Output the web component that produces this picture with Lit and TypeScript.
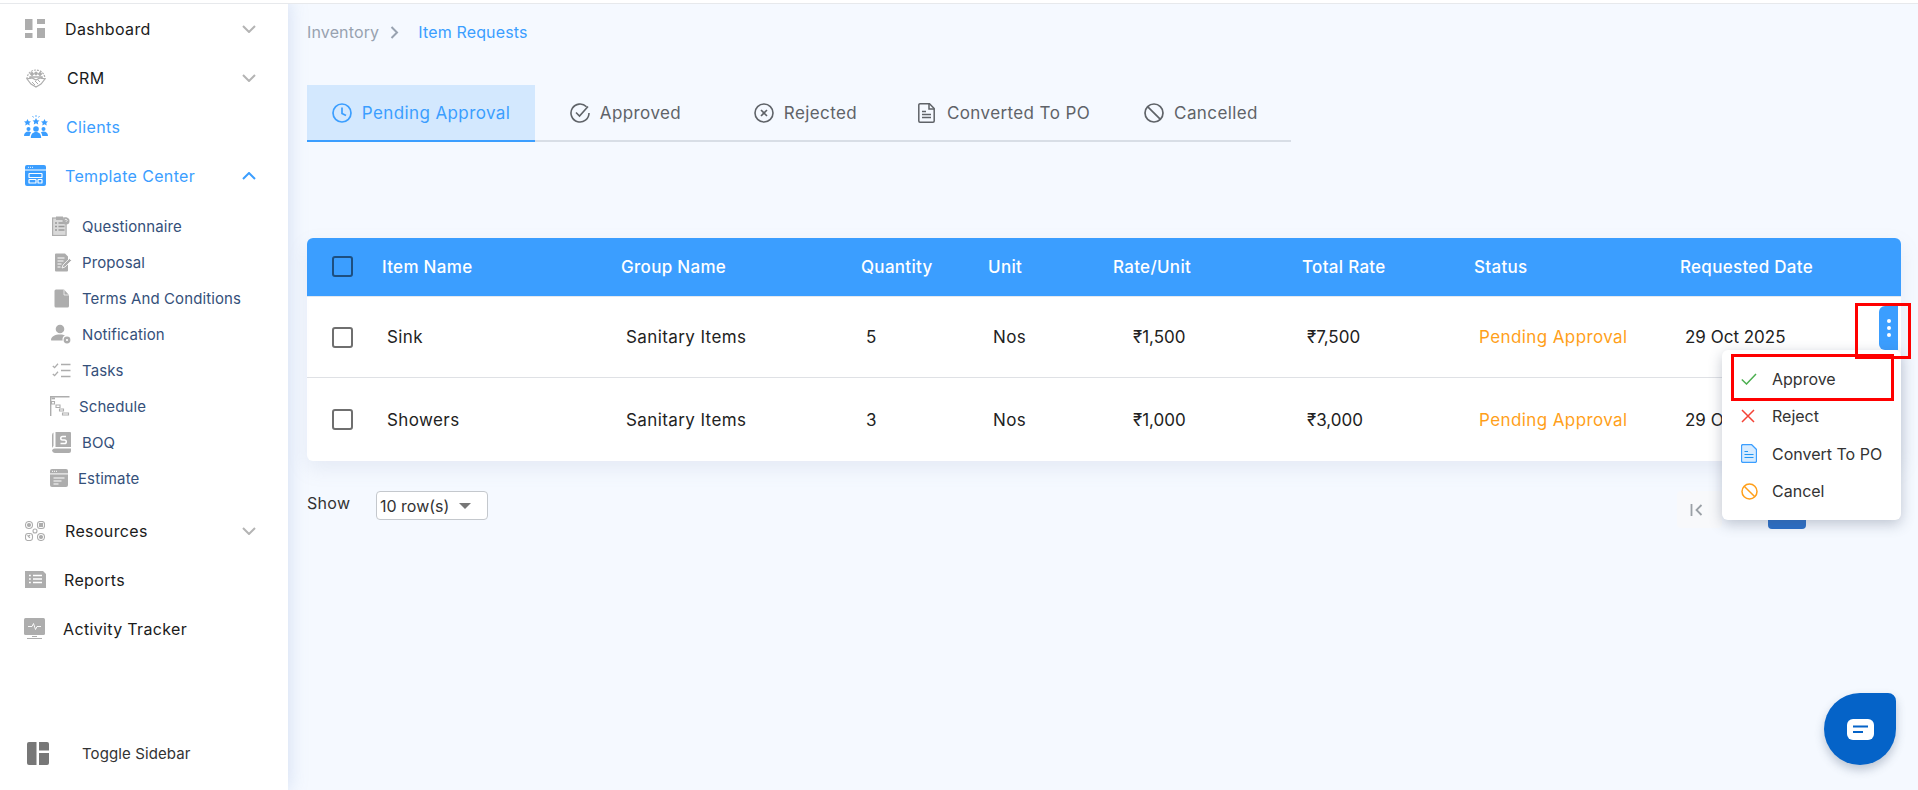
import { LitElement, html, css } from "lit";
import { customElement } from "lit/decorators.js";

const G = "#adadad";
const B = "#3b9eff";

const icons: Record<string, any> = {
  dashboard: html`<svg width="20" height="20" viewBox="0 0 20 20" fill="${G}"><rect x="0" y="0" width="7.5" height="11"/><rect x="0" y="14" width="7.5" height="5"/><rect x="12" y="0" width="8" height="5"/><rect x="12" y="9" width="8" height="10"/></svg>`,
  crm: html`<svg width="22" height="22" viewBox="0 0 22 22" fill="none" stroke="${G}"><path d="M2 12a9 9 0 0 1 18 0" stroke-width="1.2" stroke-dasharray="2 1"/><circle cx="7" cy="7" r="1.4" fill="${G}"/><circle cx="11" cy="6.5" r="1.4" fill="${G}"/><circle cx="15" cy="7" r="1.4" fill="${G}"/><path d="M5 12v-2h12v2" stroke-width="1.4"/><path d="M2 12l4 5 5 3 5-3 4-5-5-1-4 2-4-2z" stroke-width="1.2"/><path d="M7 15l3 3M10 14l3 3M13 13l2 2" stroke-width="1"/></svg>`,
  clients: html`<svg width="24" height="24" viewBox="0 0 24 24" fill="${B}"><path d="M3.5 4l1.100 2.200 2.400.3-1.700 1.600.4 2.400-2.200-1.200-2.200 1.200.4-2.400L0 6.500l2.400-.3zM12 3l1.100 2.200 2.400.3-1.700 1.600.4 2.400L12 8.300l-2.200 1.200.4-2.400-1.700-1.600 2.400-.3zM20.500 4l1.100 2.200 2.400.3-1.700 1.600.4 2.400-2.200-1.200-2.200 1.200.4-2.400L17 6.500l2.400-.3z"/><path d="M12 0v2M8.500 1l1 1.500M15.500 1l-1 1.500" stroke="${B}" stroke-width=".8"/><circle cx="4.500" cy="14" r="2"/><circle cx="19.500" cy="14" r="2"/><circle cx="12" cy="14" r="2.800"/><path d="M0 21c0-2.800 1.800-4.400 4.500-4.400 1 0 1.900.3 2.600.8-.9 1-1.300 2.200-1.400 3.600zM24 21c0-2.800-1.800-4.400-4.500-4.400-1 0-1.900.3-2.600.8.9 1 1.300 2.200 1.400 3.600zM6.800 23c0-3.800 2-6 5.200-6s5.200 2.200 5.200 6z"/></svg>`,
  template: html`<svg width="21" height="21" viewBox="0 0 21 21"><rect width="21" height="21" rx="2" fill="${B}"/><rect x="0" y="4.500" width="21" height="1" fill="#fff"/><path d="M3 2.300h1M5 2.300h1M7 2.300h1" stroke="#fff" stroke-width=".9"/><rect x="4" y="8.500" width="13" height="4" rx=".6" fill="none" stroke="#fff" stroke-width="1.2"/><rect x="4" y="14.500" width="7" height="3.500" rx=".6" fill="none" stroke="#fff" stroke-width="1.2"/><rect x="13" y="14.500" width="4" height="3.500" rx=".6" fill="none" stroke="#fff" stroke-width="1.2"/></svg>`,
  questionnaire: html`<svg width="18" height="20" viewBox="0 0 18 20"><rect x=".6" y="2" width="13.500" height="17.500" fill="#d9d9d9" stroke="${G}" stroke-width="1.2"/><rect x="4" y=".5" width="7" height="3.500" fill="${G}"/><path d="M3 7h2M3 10.500h2M3 14h2M6.500 7h6M6.500 10.500h6M6.500 14h6" stroke="#9a9a9a" stroke-width="1.4"/><circle cx="14" cy="5" r="3.500" fill="${G}"/><path d="M13 4.200a1 1 0 1 1 1.500 1l-.5.6" stroke="#fff" stroke-width=".8" fill="none"/></svg>`,
  proposal: html`<svg width="18" height="19" viewBox="0 0 18 19"><path d="M1 1.500a1 1 0 0 1 1-1h9l3 3v14a1 1 0 0 1-1 1H2a1 1 0 0 1-1-1z" fill="${G}"/><path d="M3.500 5h7M3.500 8h6M3.500 11h4M3.500 14h3" stroke="#fff" stroke-width="1.1"/><path d="M8 15l1-3 6.500-6.500 2 2L11 14z" fill="${G}" stroke="#fff" stroke-width=".8"/></svg>`,
  terms: html`<svg width="16" height="19" viewBox="0 0 16 19"><path d="M.5 2A1.500 1.500 0 0 1 2 .5h8l5 5.500v11a1.500 1.500 0 0 1-1.500 1.500H2A1.500 1.500 0 0 1 .5 17z" fill="${G}"/><path d="M10 .5V6h5" fill="none" stroke="#fff" stroke-width=".7"/></svg>`,
  notification: html`<svg width="20" height="20" viewBox="0 0 20 20" fill="${G}"><circle cx="9" cy="5" r="4.300"/><path d="M0 16c0-3.500 4-5.500 9-5.500 2.500 0 4 .5 5 1-2 .8-3 3-2.300 5H1.500C.5 16.500 0 16.500 0 16z"/><circle cx="16" cy="16" r="3.400"/><circle cx="16" cy="16" r="1.100" fill="#fff"/></svg>`,
  tasks: html`<svg width="19" height="15" viewBox="0 0 19 15" fill="none" stroke="${G}" stroke-width="1.3"><path d="M.8 3l1.800 1.600L6 .8M.8 11l1.800 1.600L6 8.800"/><path d="M9 1.500h9.500M9 7.500h9.500M9 13.500h9.500"/></svg>`,
  schedule: html`<svg width="20" height="20" viewBox="0 0 20 20" fill="none" stroke="${G}"><path d="M.7 20V.7H19.500" stroke-width="1.4"/><rect x="1.500" y="1.500" width="3.500" height="1.800" fill="${G}" stroke="none"/><path d="M1.500 5.500h3v2.500h-3zM6 9h4v2.500H6zM9.500 13h4v2h-4zM12.500 17h6v2h-6z" stroke-width="1.1"/></svg>`,
  boq: html`<svg width="19" height="21" viewBox="0 0 19 21" fill="${G}"><path d="M0 16V3a3 3 0 0 1 1.500-2.500V14A4 4 0 0 0 0 16z"/><path d="M3.500 0H18a1 1 0 0 1 1 1v14H3.500z"/><path d="M3.500 16.500H19V19a2 2 0 0 1-2 2H3a3 3 0 0 1-3-2.500 3 3 0 0 1 3.500-2z"/><path d="M14 4.500h-3.500a1.700 1.700 0 0 0 0 3.500h2a1.800 1.800 0 0 1 0 3.600H8.500" fill="none" stroke="#fff" stroke-width="1.5"/></svg>`,
  estimate: html`<svg width="18" height="18" viewBox="0 0 18 18"><rect width="18" height="18" rx="2" fill="${G}"/><rect y="4.400" width="18" height="1" fill="#fff"/><path d="M2 2.300h1M4 2.300h1M6 2.300h1" stroke="#fff"/><path d="M3.500 9h11M3.500 12h8M3.500 15h5" stroke="#fff" stroke-width="1.1"/></svg>`,
  resources: html`<svg width="20" height="20" viewBox="0 0 20 20" fill="none" stroke="${G}" stroke-width="1.1"><circle cx="4" cy="4" r="3.500"/><rect x="12.500" y=".5" width="7" height="7" rx="2.500"/><rect x=".5" y="12.500" width="7" height="7" rx="2.500"/><circle cx="16" cy="16" r="3.500"/><circle cx="10" cy="10" r="2"/><circle cx="4" cy="4" r="1.500" fill="${G}"/><rect x="14.500" y="2.500" width="3" height="3" fill="${G}"/><path d="M3 16l2-2M2.500 14l2.500 3"/><circle cx="16" cy="16" r="1.500" fill="${G}"/></svg>`,
  reports: html`<svg width="21" height="17" viewBox="0 0 21 17"><path d="M0 0h18l3 3v14H0z" fill="${G}"/><path d="M4 4.500h1.800M4 8h1.800M4 11.500h1.800M8 4.500h9M8 8h9M8 11.500h9" stroke="#fff" stroke-width="1.5"/></svg>`,
  activity: html`<svg width="21" height="21" viewBox="0 0 21 21"><rect width="21" height="17" rx="1.500" fill="${G}"/><path d="M4 8.500h4l1.500-3 2 6 1.500-3h4" fill="none" stroke="#fff" stroke-width=".9"/><path d="M8 18.500h5M3 20.500h15" stroke="${G}"/></svg>`,
  toggle: html`<svg width="22" height="23" viewBox="0 0 22 23" fill="#777"><path d="M2 0h7.500v23H2a2 2 0 0 1-2-2V2a2 2 0 0 1 2-2z"/><path d="M12 0h8a2 2 0 0 1 2 2v6.500H12z"/><path d="M12 11h10v10a2 2 0 0 1-2 2h-8z"/></svg>`,
  clock: html`<svg width="20" height="20" viewBox="0 0 20 20" fill="none" stroke="${B}" stroke-width="1.7"><circle cx="10" cy="10" r="9"/><path d="M10 4.500V10.500L14 12.500"/></svg>`,
  approved: html`<svg width="20" height="20" viewBox="0 0 20 20" fill="none" stroke="#5f6368" stroke-width="1.6"><path d="M16.500 3.800A9 9 0 1 0 19 10"/><path d="M6 9.500l3.500 3.500L18 3.500"/></svg>`,
  rejected: html`<svg width="20" height="20" viewBox="0 0 20 20" fill="none" stroke="#5f6368" stroke-width="1.6"><circle cx="10" cy="10" r="9"/><path d="M7 7l6 6M13 7l-6 6"/></svg>`,
  doc: html`<svg class="wide" width="17" height="20" viewBox="0 0 17 20" fill="none" stroke="#5f6368" stroke-width="1.5"><path d="M2 .8h9.500L16.200 5.500V18a1.200 1.200 0 0 1-1.200 1.200H2A1.200 1.200 0 0 1 .8 18V2A1.200 1.200 0 0 1 2 .8z"/><path d="M11 1v5h5M4 8.500h4M4 11.500h9M4 14.500h9"/></svg>`,
  ban: html`<svg class="shift" width="20" height="20" viewBox="0 0 20 20" fill="none" stroke="#5f6368" stroke-width="1.7"><circle cx="10" cy="10" r="9"/><path d="M3.600 3.600l12.800 12.800"/></svg>`,
  check: html`<svg width="16" height="12" viewBox="0 0 16 12" fill="none" stroke="#4caf50" stroke-width="1.5"><path d="M.8 6.500l4.700 4.500L15 1"/></svg>`,
  cross: html`<svg width="14" height="14" viewBox="0 0 14 14" fill="none" stroke="#f44336" stroke-width="1.5"><path d="M1 1l12 12M13 1L1 13"/></svg>`,
  docBlue: html`<svg width="16" height="19" viewBox="0 0 16 19"><path d="M2 .5h8.500L15.500 5.500V17a1.500 1.500 0 0 1-1.500 1.500H2A1.500 1.500 0 0 1 .5 17V2A1.500 1.500 0 0 1 2 .5z" fill="#d6ebff" stroke="${B}" stroke-width="1.3"/><path d="M3.500 7.500h3.500M3.500 10.500h9M3.500 13.500h9" stroke="#2196f3" stroke-width="1.2"/></svg>`,
  banOrange: html`<svg width="17" height="17" viewBox="0 0 17 17" fill="none" stroke="#ff9f1a" stroke-width="1.5"><circle cx="8.500" cy="8.500" r="7.500"/><path d="M3.200 3.200l10.600 10.600"/></svg>`,
};

const down = html`<svg class="chev" width="14" height="8" viewBox="0 0 14 8" fill="none" stroke="#b4b4b4" stroke-width="2"><path d="M1 1l6 6 6-6"/></svg>`;
const up = html`<svg class="chev" width="14" height="8" viewBox="0 0 14 8" fill="none" stroke="${B}" stroke-width="2"><path d="M1 7l6-6 6 6"/></svg>`;

interface Nav { icon: string; label: string; pad: number; gap: number; active?: boolean; caret?: "up" | "down"; }

const topNav: Nav[] = [
  { icon: "dashboard", label: "Dashboard", pad: 25, gap: 20, caret: "down" },
  { icon: "crm", label: "CRM", pad: 25, gap: 20, caret: "down" },
  { icon: "clients", label: "Clients", pad: 24, gap: 18, active: true },
  { icon: "template", label: "Template Center", pad: 25, gap: 19, active: true, caret: "up" },
];
const subNav: Nav[] = [
  { icon: "questionnaire", label: "Questionnaire", pad: 52, gap: 12 },
  { icon: "proposal", label: "Proposal", pad: 54, gap: 10 },
  { icon: "terms", label: "Terms And Conditions", pad: 54, gap: 12 },
  { icon: "notification", label: "Notification", pad: 51, gap: 11 },
  { icon: "tasks", label: "Tasks", pad: 52, gap: 11 },
  { icon: "schedule", label: "Schedule", pad: 50, gap: 9 },
  { icon: "boq", label: "BOQ", pad: 52, gap: 11 },
  { icon: "estimate", label: "Estimate", pad: 50, gap: 10 },
];
const lowNav: Nav[] = [
  { icon: "resources", label: "Resources", pad: 25, gap: 20, caret: "down" },
  { icon: "reports", label: "Reports", pad: 25, gap: 18 },
  { icon: "activity", label: "Activity Tracker", pad: 24, gap: 18 },
];

const tabs = [
  { icon: "clock", label: "Pending Approval", active: true },
  { icon: "approved", label: "Approved" },
  { icon: "rejected", label: "Rejected" },
  { icon: "doc", label: "Converted To PO" },
  { icon: "ban", label: "Cancelled" },
];

const rows = [
  { name: "Sink", group: "Sanitary Items", qty: "5", unit: "Nos", rate: "₹1,500", total: "₹7,500", date: "29 Oct 2025", menu: true },
  { name: "Showers", group: "Sanitary Items", qty: "3", unit: "Nos", rate: "₹1,000", total: "₹3,000", date: "29 Oct 2025", menu: false },
];

const menu = [
  { icon: "check", label: "Approve" },
  { icon: "cross", label: "Reject" },
  { icon: "docBlue", label: "Convert To PO" },
  { icon: "banOrange", label: "Cancel" },
];

@customElement("app-root")
export class AppRoot extends LitElement {
  static styles = css`
    :host { display: block; width: 1918px; height: 790px; overflow: hidden; font-family: Inter, "Noto Sans", sans-serif; background: #f5f9ff; }
    * { box-sizing: border-box; }
    .page { display: flex; height: 790px; position: relative; }
    .topline { position: absolute; left: 0; right: 0; top: 0; height: 4px; background: #fff; border-bottom: 1px solid #e7e9ec; z-index: 3; }

    aside { width: 288px; flex: none; background: #fff; box-shadow: 0 0 18px rgba(120, 150, 205, .28); display: flex; flex-direction: column; padding-top: 4px; z-index: 2; }
    .nav { display: flex; align-items: center; height: 49px; font-size: 16px; letter-spacing: .35px; color: #1b1b1b; padding-right: 32px; }
    .nav.active { color: #3b9eff; }
    .ico { display: flex; align-items: center; justify-content: center; }
    .nav .chev { margin-left: auto; }
    .sub { display: flex; align-items: center; height: 36px; font-size: 15px; letter-spacing: .1px; color: #35507a; }
    .sublist { display: flex; flex-direction: column; margin: 0 0 10px; padding-top: 8px; }
    .spacer { flex: 1; }
    .toggle { display: flex; align-items: center; height: 36px; padding-left: 27px; margin-bottom: 19px; font-size: 15px; letter-spacing: .1px; color: #333; gap: 33px; }

    main { flex: 1; padding: 0 17px 0 19px; min-width: 0; position: relative; }
    .crumb { display: flex; align-items: center; height: 24px; margin-top: 20px; font-size: 16px; letter-spacing: .15px; color: #98a2b0; }
    .crumb svg { margin: 0 19px 0 11px; }
    .crumb b { font-weight: 400; color: #3b9eff; }
    .tabs { display: grid; grid-template-columns: 228px 181px 179px 218px 178px; width: 984px; margin-top: 41px; border-bottom: 2px solid #d8dee6; height: 57px; }
    .tab { display: flex; align-items: center; justify-content: center; gap: 10px; font-size: 17px; letter-spacing: .4px; color: #5f6368; height: 56px; }
    .tab.active { background: #d3e8fe; color: #3b9eff; height: 57px; border-bottom: 2px solid #3b9eff; }
    .tab .wide { margin-right: 2px; }
    .tab .shift { margin-left: -2px; }

    .tablewrap { position: relative; margin-top: 96px; border-radius: 6px; box-shadow: 0 8px 20px rgba(120, 140, 180, .13); background: #fff; }
    .grid { display: grid; grid-template-columns: 75px 239px 240px 127px 125px 189px 172px 206px 221px; align-items: center; }
    .head { height: 59px; background: #3b9eff; color: #fff; font-weight: 500; font-size: 17px; letter-spacing: .3px; border-radius: 6px 6px 0 0; border-bottom: 1px solid #e3e8ef; }
    .row { height: 81px; font-size: 17px; letter-spacing: .4px; color: #222; border-bottom: 1px solid #dfe1e5; }
    .row.last { height: 83px; border-bottom: none; border-radius: 0 0 6px 6px; }
    .row > span { padding-left: 5px; }
    .row > .rate { padding-left: 20px; }
    .row > .num { letter-spacing: 0; }
    .row > .status { color: #ff9f1a; }
    .cb { width: 21px; height: 21px; border: 2.5px solid #6f6f6f; border-radius: 3px; margin-left: 25px; }
    .head .cb { border-color: #1d4f80; margin-top: -2px; }
    .row > .datecell { display: flex; align-items: center; justify-content: space-between; padding-right: 3px; align-self: stretch; letter-spacing: 0; }
    .kebab { width: 19px; height: 44px; margin-bottom: 18px; background: #3b9eff; border-radius: 6px 0 0 6px; display: flex; flex-direction: column; align-items: center; justify-content: center; gap: 3px; }
    .kebab i { width: 4px; height: 4px; border-radius: 50%; background: #fff; }

    .menu { position: absolute; top: 112px; right: 0; width: 179px; height: 170px; background: #fff; border-radius: 6px; box-shadow: 0 4px 14px rgba(70, 85, 110, .32); padding-top: 10px; z-index: 2; }
    .mi { display: flex; align-items: center; height: 37.5px; font-size: 16px; color: #333; padding-left: 19px; }
    .mico { width: 31px; display: flex; align-items: center; }
    .redbox { position: absolute; border: 3px solid #f00; z-index: 3; }
    .rb1 { left: 1548px; top: 65px; width: 56px; height: 56px; }
    .rb2 { left: 1424px; top: 116px; width: 163px; height: 47px; }

    .foot { display: flex; align-items: flex-start; margin-top: 30px; padding-right: 95px; font-size: 16px; color: #333; }
    .show { width: 45px; line-height: 24px; letter-spacing: .3px; }
    .select { margin-left: 24px; width: 112px; height: 29px; border: 1px solid #c4c8cd; border-radius: 4px; background: #fff; display: flex; align-items: center; padding-left: 3px; font-size: 16px; gap: 10px; }
    .caret { width: 0; height: 0; border: 6px solid transparent; border-top: 6px solid #777; border-bottom: none; }
    .pager { margin-left: auto; display: flex; }
    .pbtn { width: 45px; height: 37px; background: #f8f9fb; border-radius: 4px; display: flex; align-items: center; justify-content: center; padding-right: 6px; }
    .pgap { width: 46px; }
    .pcur { width: 38px; height: 38px; background: #2a6fc9; border-radius: 4px; }

    .chat { position: absolute; left: 1824px; top: 693px; width: 72px; height: 72px; background: #0563c8; border-radius: 50% 8px 50% 50%; box-shadow: 0 5px 10px rgba(60, 80, 110, .3); display: flex; align-items: center; justify-content: center; z-index: 4; }
  `;

  private nav(n: Nav) {
    return html`<div class="nav ${n.active ? "active" : ""}" style="padding-left:${n.pad}px">
      <span class="ico" style="margin-right:${n.gap}px">${icons[n.icon]}</span>
      <span>${n.label}</span>
      ${n.caret === "up" ? up : n.caret === "down" ? down : ""}
    </div>`;
  }

  private sub(n: Nav) {
    return html`<div class="sub" style="padding-left:${n.pad}px">
      <span class="ico" style="margin-right:${n.gap}px">${icons[n.icon]}</span>
      <span>${n.label}</span>
    </div>`;
  }

  render() {
    return html`<div class="page">
      <div class="topline"></div>
      <aside>
        ${topNav.map((n) => this.nav(n))}
        <div class="sublist">${subNav.map((n) => this.sub(n))}</div>
        ${lowNav.map((n) => this.nav(n))}
        <div class="spacer"></div>
        <div class="toggle">${icons.toggle}<span>Toggle Sidebar</span></div>
      </aside>
      <main>
        <div class="crumb">
          <span>Inventory</span>
          <svg width="9" height="13" viewBox="0 0 9 13" fill="none" stroke="#98a2b0" stroke-width="2"><path d="M1.500 1l5.500 5.500L1.500 12"/></svg>
          <b>Item Requests</b>
        </div>
        <div class="tabs">
          ${tabs.map((t) => html`<div class="tab ${t.active ? "active" : ""}">${icons[t.icon]}<span>${t.label}</span></div>`)}
        </div>
        <div class="tablewrap">
          <div class="grid head">
            <div class="cb"></div>
            <div>Item Name</div><div>Group Name</div><div>Quantity</div><div>Unit</div>
            <div>Rate/Unit</div><div>Total Rate</div><div>Status</div><div>Requested Date</div>
          </div>
          ${rows.map((r, i) => html`<div class="grid row ${i === rows.length - 1 ? "last" : ""}">
            <div class="cb"></div>
            <span>${r.name}</span><span>${r.group}</span><span>${r.qty}</span><span>${r.unit}</span>
            <span class="rate num">${r.rate}</span><span class="num">${r.total}</span><span class="status">Pending Approval</span>
            <span class="datecell">
              <span>${r.date}</span>
              ${r.menu ? html`<div class="kebab"><i></i><i></i><i></i></div>` : ""}
            </span>
          </div>`)}
          <div class="menu">
            ${menu.map((m) => html`<div class="mi"><span class="mico">${icons[m.icon]}</span><span>${m.label}</span></div>`)}
          </div>
          <div class="redbox rb1"></div>
          <div class="redbox rb2"></div>
        </div>
        <div class="foot">
          <span class="show">Show</span>
          <div class="select"><span>10 row(s)</span><span class="caret"></span></div>
          <div class="pager">
            <div class="pbtn"><svg width="13" height="12" viewBox="0 0 13 12" fill="none" stroke="#9aa0a6" stroke-width="1.8"><path d="M1.500 0v12M11.500 1l-5 5 5 5"/></svg></div>
            <div class="pgap"></div>
            <div class="pcur"></div>
          </div>
        </div>
      </main>
      <div class="chat"><svg width="27" height="21" viewBox="0 0 27 21"><rect width="27" height="21" rx="6" fill="#fff"/><path d="M6 7.500h15M6 13h10" stroke="#0563c8" stroke-width="2.2"/></svg></div>
    </div>`;
  }
}
